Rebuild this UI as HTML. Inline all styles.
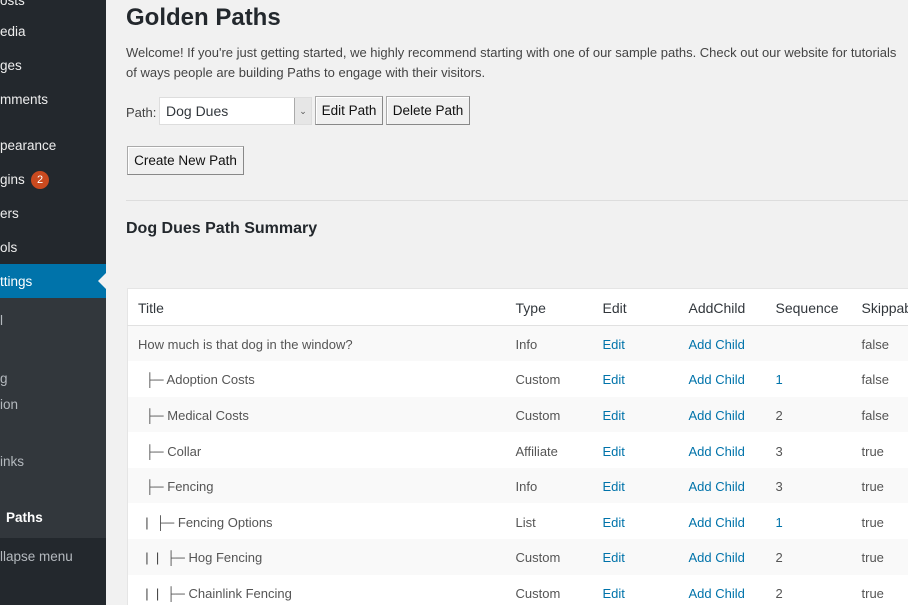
<!DOCTYPE html>
<html><head><style>
*{margin:0;padding:0;box-sizing:border-box}
html,body{width:908px;height:605px;overflow:hidden}
body{background:#f1f1f1;font-family:"Liberation Sans",sans-serif;position:relative;color:#444}
#side{position:absolute;left:0;top:0;width:106px;height:605px;background:#23282d}
.si{position:absolute;left:0;color:#eee;font-size:13.5px;white-space:nowrap}
#sub{position:absolute;left:0;top:298px;width:106px;height:240px;background:#32373c}
#act{position:absolute;left:0;top:264px;width:106px;height:34px;background:#0073aa}
.arrow{position:absolute;left:98px;top:273px;width:0;height:0;border-top:8px solid transparent;border-bottom:8px solid transparent;border-right:8px solid #f1f1f1}
.badge{position:absolute;left:31px;top:171px;width:18px;height:18px;border-radius:9px;background:#ca4a1f;color:#fff;font-size:11px;text-align:center;line-height:18px}
.abs{position:absolute;white-space:nowrap}
.btn{position:absolute;background:#f0f0f0;border:1px solid #aaa;border-right-color:#888;border-bottom-color:#888;box-shadow:inset 1px 1px 0 #fff;font-size:13.5px;color:#111;text-align:center;line-height:27px}
table{position:absolute;left:127px;top:288px;width:800px;border-collapse:collapse;background:#fff;border:1px solid #e5e5e5;font-size:13px}
th{font-weight:normal;text-align:left;color:#32373c;height:37px;border-bottom:1px solid #e1e1e1;font-size:14px;padding-top:2px}
td{height:35.6px;color:#555;padding-top:2px}
tr.o td{background:#f9f9f9}
td a{color:#0073aa;text-decoration:none}
.c1{padding-left:10px;width:388px}.c2{width:87px}.c3{width:86px}.c4{width:87px}.c5{width:86px}
.p{color:#444}
</style></head><body>
<div id="side">
<div class="si" style="top:-7px">osts</div>
<div class="si" style="top:24px">edia</div>
<div class="si" style="top:58px">ges</div>
<div class="si" style="top:92px">mments</div>
<div class="si" style="top:138px">pearance</div>
<div class="si" style="top:172px">gins</div>
<div class="badge">2</div>
<div class="si" style="top:206px">ers</div>
<div class="si" style="top:240px">ols</div>
</div>
<div id="act"></div>
<div class="si" style="top:274px;color:#fff">ttings</div>
<div class="arrow"></div>
<div id="sub"></div>
<div class="si" style="top:313px;color:#b4b9be">l</div>
<div class="si" style="top:371px;color:#b4b9be">g</div>
<div class="si" style="top:397px;color:#b4b9be">ion</div>
<div class="si" style="top:454px;color:#b4b9be">inks</div>
<div class="si" style="top:510px;color:#fff;font-weight:bold;left:6px">Paths</div>
<div class="si" style="top:549px;color:#b4b9be">llapse menu</div>

<div class="abs" style="left:126px;top:4px;font-size:24px;color:#23282d;font-weight:bold">Golden Paths</div>
<div class="abs" style="left:126px;top:43px;font-size:13px;line-height:20px;color:#444">Welcome! If you're just getting started, we highly recommend starting with one of our sample paths. Check out our website for tutorials<br>of ways people are building Paths to engage with their visitors.</div>
<div class="abs" style="left:126px;top:105px;font-size:13px">Path:</div>
<div class="abs" style="left:159px;top:97px;width:153px;height:28px;background:#fff;border:1px solid #ddd;font-size:14px;line-height:27px;padding-left:6px;color:#32373c">Dog Dues</div>
<div class="abs" style="left:294px;top:98px;width:17px;height:26px;background:#e6e6e6;border-left:1px solid #aaa;font-size:9px;text-align:center;line-height:26px;color:#555">&#8964;</div>
<div class="btn" style="left:315px;top:96px;width:68px;height:29px">Edit Path</div>
<div class="btn" style="left:386px;top:96px;width:84px;height:29px">Delete Path</div>
<div class="btn" style="left:127px;top:146px;width:117px;height:29px">Create New Path</div>
<div class="abs" style="left:126px;top:200px;width:782px;height:1px;background:#ddd"></div>
<div class="abs" style="left:126px;top:220px;font-size:16px;font-weight:bold;color:#23282d">Dog Dues Path Summary</div>
<table>
<tr><th class="c1">Title</th><th class="c2">Type</th><th class="c3">Edit</th><th class="c4">AddChild</th><th class="c5">Sequence</th><th>Skippable</th></tr>
<tr class="o"><td class="c1">How much is that dog in the window?</td><td>Info</td><td><a>Edit</a></td><td><a>Add Child</a></td><td></td><td>false</td></tr>
<tr><td class="c1">&nbsp;&nbsp;├─ Adoption Costs</td><td>Custom</td><td><a>Edit</a></td><td><a>Add Child</a></td><td><a>1</a></td><td>false</td></tr>
<tr class="o"><td class="c1">&nbsp;&nbsp;├─ Medical Costs</td><td>Custom</td><td><a>Edit</a></td><td><a>Add Child</a></td><td>2</td><td>false</td></tr>
<tr><td class="c1">&nbsp;&nbsp;├─ Collar</td><td>Affiliate</td><td><a>Edit</a></td><td><a>Add Child</a></td><td>3</td><td>true</td></tr>
<tr class="o"><td class="c1">&nbsp;&nbsp;├─ Fencing</td><td>Info</td><td><a>Edit</a></td><td><a>Add Child</a></td><td>3</td><td>true</td></tr>
<tr><td class="c1">&nbsp;&nbsp;<span class="p">|</span>&nbsp;&nbsp;├─ Fencing Options</td><td>List</td><td><a>Edit</a></td><td><a>Add Child</a></td><td><a>1</a></td><td>true</td></tr>
<tr class="o"><td class="c1">&nbsp;&nbsp;<span class="p">|</span>&nbsp;&nbsp;<span class="p">|</span>&nbsp;&nbsp;├─ Hog Fencing</td><td>Custom</td><td><a>Edit</a></td><td><a>Add Child</a></td><td>2</td><td>true</td></tr>
<tr><td class="c1">&nbsp;&nbsp;<span class="p">|</span>&nbsp;&nbsp;<span class="p">|</span>&nbsp;&nbsp;├─ Chainlink Fencing</td><td>Custom</td><td><a>Edit</a></td><td><a>Add Child</a></td><td>2</td><td>true</td></tr>
</table>
</body></html>
